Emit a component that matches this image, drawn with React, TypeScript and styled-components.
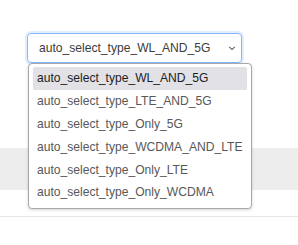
import React from "react";
import styled, { createGlobalStyle } from "styled-components";

const Global = createGlobalStyle`
  html, body { margin: 0; padding: 0; background: #fff; }
  body { font-family: "Liberation Sans", Arial, sans-serif; }
`;

const Page = styled.div`
  width: 298px;
  height: 245px;
  display: flex;
  flex-direction: column;
  overflow: hidden;
`;

const Top = styled.div`
  height: 148px;
  padding: 33px 0 0 27px;
  box-sizing: border-box;
`;

const SelectWrap = styled.div`
  position: relative;
  width: 215px;
`;

const SelectBox = styled.div`
  height: 30px;
  box-sizing: border-box;
  border: 1px solid #86b7fe;
  border-radius: 4px;
  box-shadow: 0 0 0 2px rgba(13, 110, 253, 0.12);
  display: flex;
  align-items: center;
  justify-content: space-between;
  padding: 0 5px 0 11px;
  font-size: 12.1px;
  color: #3c3c3c;
`;

const Chevron = styled.svg`
  width: 8px;
  height: 6px;
`;

const Menu = styled.ul`
  position: absolute;
  top: 30px;
  left: 1px;
  width: 224px;
  margin: 0;
  padding: 3px 4px 4px;
  box-sizing: border-box;
  list-style: none;
  background: #fff;
  border: 1px solid #a9a9a9;
  border-radius: 4px;
  box-shadow: 0 1px 3px rgba(0, 0, 0, 0.18);
  z-index: 2;
`;

const Item = styled.li<{ $active?: boolean }>`
  height: 22.8px;
  display: flex;
  align-items: center;
  padding-left: 4px;
  font-size: 12.1px;
  color: ${(p) => (p.$active ? "#1e1e1e" : "#585858")};
  background: ${(p) => (p.$active ? "#e1e1e6" : "transparent")};
  border-radius: 2px;
`;

const Band = styled.div`
  height: 42px;
  background: #ededed;
`;

const Spacer = styled.div`
  height: 26px;
  border-bottom: 1px solid #e6e6e6;
`;

const options = [
  "auto_select_type_WL_AND_5G",
  "auto_select_type_LTE_AND_5G",
  "auto_select_type_Only_5G",
  "auto_select_type_WCDMA_AND_LTE",
  "auto_select_type_Only_LTE",
  "auto_select_type_Only_WCDMA",
];

export default function App() {
  return (
    <Page>
      <Global />
      <Top>
        <SelectWrap>
          <SelectBox>
            <span>{options[0]}</span>
            <Chevron viewBox="0 0 8 6">
              <path d="M1.2 1.8 L4 4.4 L6.8 1.8" fill="none" stroke="#666" strokeWidth="1.1" />
            </Chevron>
          </SelectBox>
          <Menu>
            {options.map((o, i) => (
              <Item key={o} $active={i === 0}>
                {o}
              </Item>
            ))}
          </Menu>
        </SelectWrap>
      </Top>
      <Band />
      <Spacer />
    </Page>
  );
}
